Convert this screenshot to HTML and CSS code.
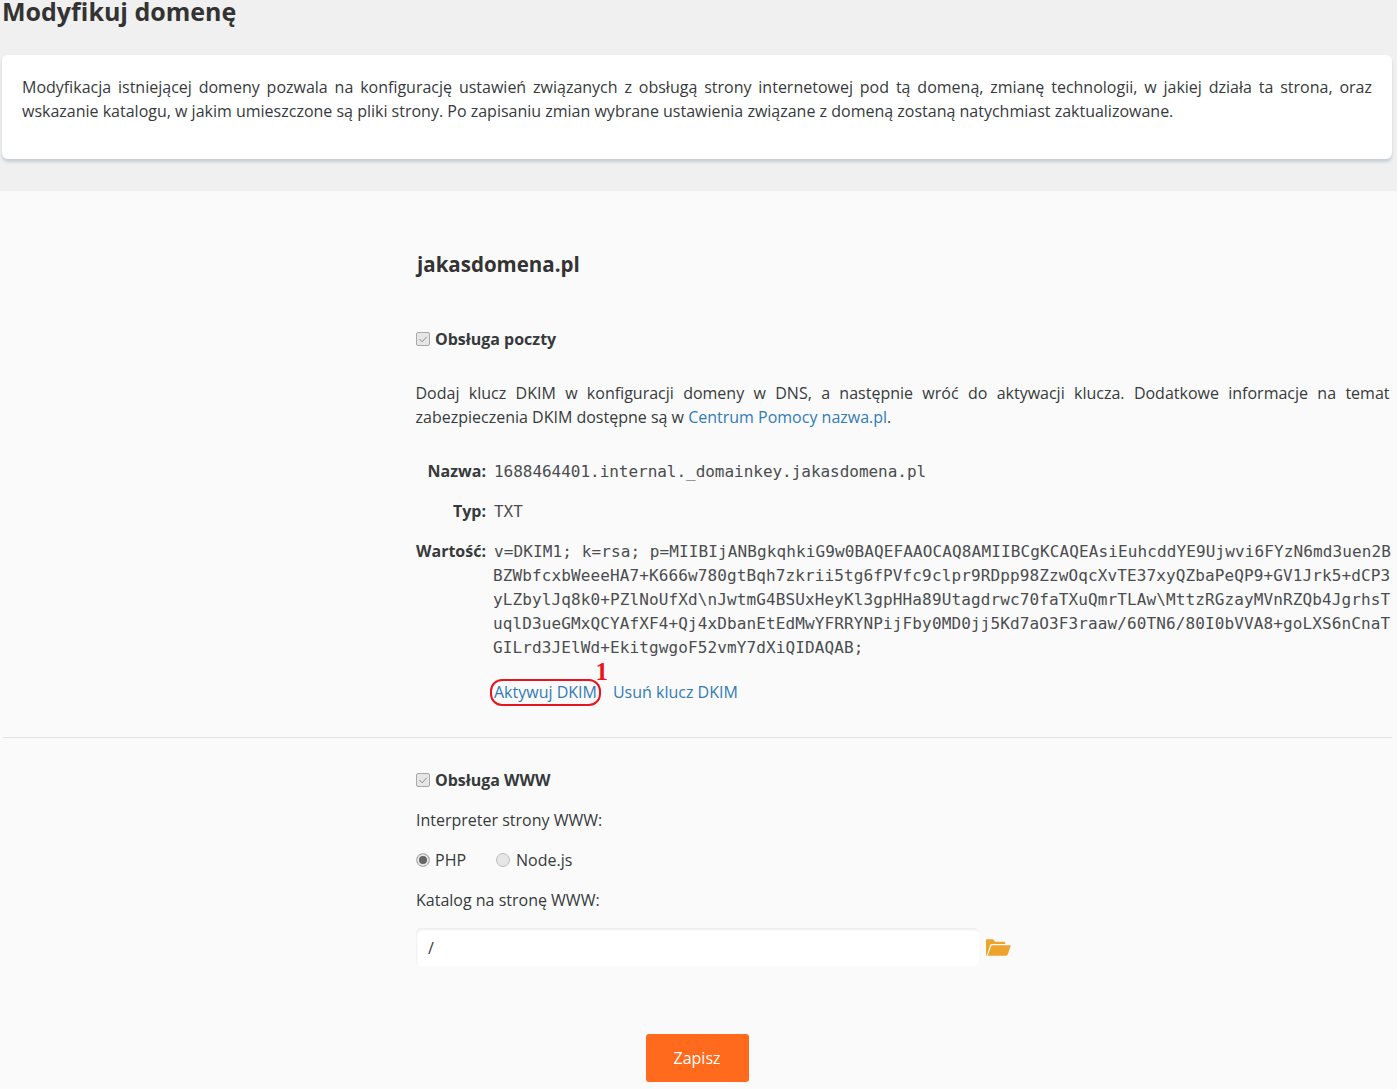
FILE: index.html
```html
<!DOCTYPE html>
<html lang="pl">
<head>
<meta charset="utf-8">
<title>Modyfikuj domenę</title>
<link rel="stylesheet" href="styles.css">
</head>
<body>
<header class="top">
  <h1 class="title">Modyfikuj domenę</h1>
  <div class="card">
    <p>Modyfikacja istniejącej domeny pozwala na konfigurację ustawień związanych z obsługą strony internetowej pod tą domeną, zmianę technologii, w jakiej działa ta strona, oraz wskazanie katalogu, w jakim umieszczone są pliki strony. Po zapisaniu zmian wybrane ustawienia związane z domeną zostaną natychmiast zaktualizowane.</p>
  </div>
</header>
<main class="panel">
  <section class="mail">
    <div class="col">
      <h2 class="domain">jakasdomena.pl</h2>
      <div class="check check-mail"><span class="box"><svg viewBox="0 0 14 14" width="14" height="14"><path d="M3.5 7l2.6 2.8 4.6-5" fill="none" stroke="#8a8a8a" stroke-width="1"/></svg></span><b>Obsługa poczty</b></div>
      <p class="intro">Dodaj klucz DKIM w konfiguracji domeny w DNS, a następnie wróć do aktywacji klucza. Dodatkowe informacje na temat zabezpieczenia DKIM dostępne są w <a href="#">Centrum Pomocy nazwa.pl</a>.</p>
      <div class="dns">
        <div class="key">Nazwa:</div>
        <div class="val">1688464401.internal._domainkey.jakasdomena.pl</div>
        <div class="key">Typ:</div>
        <div class="val">TXT</div>
        <div class="key">Wartość:</div>
        <div class="val long"><div class="first"><span>v=DKIM1;</span><span>k=rsa;</span><span>p=MIIBIjANBgkqhkiG9w0BAQEFAAOCAQ8AMIIBCgKCAQEAsiEuhcddYE9Ujwvi6FYzN6md3uen2B</span></div><div>BZWbfcxbWeeeHA7+K666w780gtBqh7zkrii5tg6fPVfc9clpr9RDpp98ZzwOqcXvTE37xyQZbaPeQP9+GV1Jrk5+dCP3</div><div>yLZbylJq8k0+PZlNoUfXd\nJwtmG4BSUxHeyKl3gpHHa89Utagdrwc70faTXuQmrTLAw\MttzRGzayMVnRZQb4JgrhsT</div><div>uqlD3ueGMxQCYAfXF4+Qj4xDbanEtEdMwYFRRYNPijFby0MD0jj5Kd7aO3F3raaw/60TN6/80I0bVVA8+goLXS6nCnaT</div><div>GILrd3JElWd+EkitgwgoF52vmY7dXiQIDAQAB;</div></div>
      </div>
      <div class="actions">
        <span class="mark"><a href="#">Aktywuj DKIM</a><span class="num">1</span></span>
        <a href="#">Usuń klucz DKIM</a>
      </div>
    </div>
  </section>
  <section class="www">
    <div class="col">
      <div class="check"><span class="box"><svg viewBox="0 0 14 14" width="14" height="14"><path d="M3.5 7l2.6 2.8 4.6-5" fill="none" stroke="#8a8a8a" stroke-width="1"/></svg></span><b>Obsługa WWW</b></div>
      <div class="row">Interpreter strony WWW:</div>
      <div class="row radios">
        <span class="radio-item"><span class="radio on"></span>PHP</span>
        <span class="radio-item"><span class="radio"></span>Node.js</span>
      </div>
      <div class="row">Katalog na stronę WWW:</div>
      <div class="path">
        <div class="input">/</div>
        <svg class="folder" viewBox="0 0 26 17" width="25" height="17"><path d="M0 17V1.200C0 .5.5 0 1.200 0h6.200l2 2.400h9.400c.7 0 1.200.5 1.200 1.200v1.300H6.200c-1 0-1.700.5-2.100 1.400L.6 17z" fill="#eda32c"/><path d="M1.800 17 5.200 7.400c.3-.8.8-1.200 1.600-1.200H25.800L22.600 15.800c-.3.8-.9 1.200-1.700 1.200z" fill="#eda32c"/></svg>
      </div>
    </div>
    <div class="submit"><button class="btn" type="button">Zapisz</button></div>
  </section>
</main>
</body>
</html>
```
FILE: styles.css
```css
* { box-sizing: border-box; }
html, body { margin: 0; padding: 0; }
body {
  background: #f0f0f0;
  color: #373a3c;
  font-family: "Open Sans", sans-serif;
  font-size: 16px;
  line-height: 24px;
  overflow: hidden;
  height: 1089px;
}
a { color: #337ab7; text-decoration: none; }
p { margin: 0; }
.top { height: 191px; padding: 0 5px 0 2px; }
.title {
  margin: 0;
  height: 55px;
  font-size: 25px;
  line-height: 22px;
  font-weight: 700;
  color: #333;
}
.card {
  height: 104px;
  padding: 20px;
  background: #fff;
  border-radius: 6px;
  box-shadow: 0 3px 3px rgba(160, 175, 185, .5);
  text-align: justify;
}
.panel { background: #fafafa; height: 898px; }
.mail { height: 547px; margin: 0 5px 0 3px; border-bottom: 1px solid #e2e2e2; }
.col { margin-left: 413px; }
.domain {
  margin: 0;
  padding: 59px 0 0 1px;
  height: 136px;
  font-size: 20.5px;
  line-height: 28px;
  font-weight: 700;
  color: #333;
}
.check { display: flex; align-items: center; height: 24px; }
.check b { font-weight: 700; color: #373a3c; }
.check-mail { margin-bottom: 30px; }
.box {
  width: 14px;
  height: 14px;
  margin-right: 5px;
  background: #e6e6e6;
  border: 1px solid #a8a8a8;
  border-radius: 2px;
  display: flex;
  align-items: center;
  justify-content: center;
}
.box svg { flex: none; }
.intro { width: 974px; margin-left: -.5px; text-align: justify; margin-bottom: 30px; }
.dns {
  display: grid;
  grid-template-columns: 70px 898px;
  column-gap: 7px;
  row-gap: 16px;
  width: 976px;
}
.key { text-align: right; font-weight: 700; color: #373a3c; }
.val {
  font-family: "DejaVu Sans Mono", monospace;
  font-size: 16px;
  color: #4a4d4f;
  letter-spacing: -.03px;
  padding-left: 1px;
  margin: 1px 0 -1px;
}
.long { padding-left: 0; letter-spacing: .12px; }
.first { display: flex; justify-content: space-between; padding-left: 1px; white-space: nowrap; }
.actions { margin: 21px 0 0 74px; display: flex; gap: 12px; }
.mark {
  position: relative;
  padding: 0 2px 0 3px;
  height: 27px;
  line-height: 22px;
  border: 2px solid #e8141e;
  border-radius: 12px;
  margin: -1px 0 -2px;
}
.mark a { margin-left: -1px; }
.num {
  position: absolute;
  right: -9px;
  top: -23px;
  color: #e8141e;
  font-family: "Liberation Serif", serif;
  font-weight: 700;
  font-size: 25px;
  line-height: 28px;
}
.www .col { margin-left: 416px; padding-top: 30px; }
.www .check { height: 24px; }
.row { margin-top: 16px; height: 24px; }
.radios { display: flex; gap: 30px; }
.radio-item { display: flex; align-items: center; }
.radio {
  width: 14px;
  height: 14px;
  margin-right: 5px;
  border-radius: 50%;
  background: #e6e6e6;
  border: 1px solid #bdbdbd;
  display: block;
}
.radio.on { background: #666; box-shadow: inset 0 0 0 2px #e6e6e6; }
.radio-item + .radio-item .radio { margin-right: 6px; }
.path { display: flex; align-items: center; margin-top: 16px; }
.input {
  width: 563px;
  height: 38px;
  padding: 8px 12px;
  background: #fff;
  border-radius: 5px;
  box-shadow: inset 1px 2px 2px rgba(0, 0, 0, .07);
  font-size: 16px;
}
.folder { margin-left: 7px; }
.submit { display: flex; justify-content: center; margin-top: 68px; padding-right: 3px; }
.btn {
  width: 103px;
  height: 48px;
  border: 0;
  border-radius: 3px;
  background: #ff6a1c;
  color: #fff;
  font-family: "Open Sans", sans-serif;
  font-size: 16px;
}
```
